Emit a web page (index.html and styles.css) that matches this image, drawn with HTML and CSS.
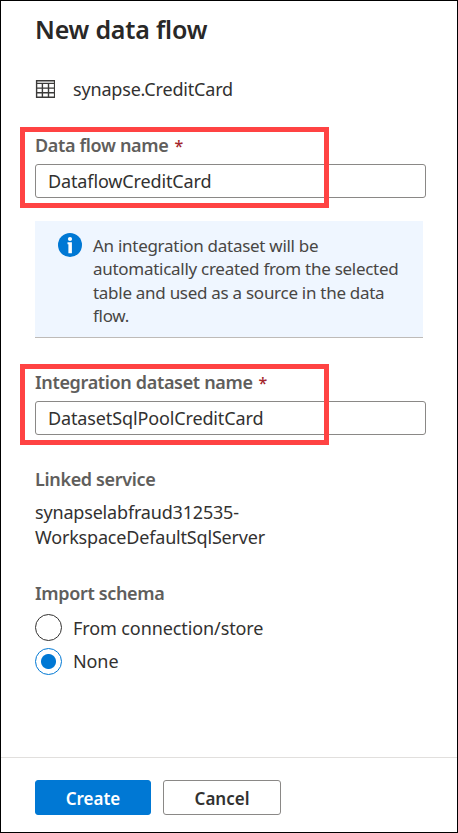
FILE: index.html
```html
<!DOCTYPE html>
<html lang="en">
<head>
<meta charset="utf-8">
<title>New data flow</title>
<link rel="stylesheet" href="styles.css">
</head>
<body>
<main class="panel">
  <h1 class="title">New data flow</h1>
  <div class="source">
    <svg class="table-icon" viewBox="0 0 20 18" width="20" height="18" fill="none" stroke="#3b3a39">
      <path d="M1.6.7h18v16.6h-18zM1.6 3.4h18M1.6 8.1h18M1.6 12.7h18M7.4 3.4v13.9M13.5 3.4v13.9" stroke-width="1.4"/>
    </svg>
    <span class="source-name">synapse.CreditCard</span>
  </div>
  <section class="field field-flow">
    <label class="label" for="flow">Data flow name<span class="req">*</span></label>
    <input class="input" id="flow" value="DataflowCreditCard">
    <div class="highlight"></div>
  </section>
  <aside class="info">
    <svg class="info-icon" viewBox="0 0 24 24" width="24" height="24">
      <circle cx="12" cy="12" r="12" fill="#0078d4"/>
      <circle cx="12" cy="6" r="2.1" fill="#fff"/>
      <path d="M9.5 9.3h4.4v11h-3.5v-9h-.9z" fill="#fff"/>
    </svg>
    <p class="info-text">An integration dataset will be<br>automatically created from the selected<br>table and used as a source in the data<br>flow.</p>
  </aside>
  <section class="field field-dataset">
    <label class="label" for="dataset">Integration dataset name<span class="req">*</span></label>
    <input class="input" id="dataset" value="DatasetSqlPoolCreditCard">
    <div class="highlight"></div>
  </section>
  <section class="linked">
    <h2 class="label">Linked service</h2>
    <p class="linked-value">synapselabfraud312535-<br>WorkspaceDefaultSqlServer</p>
  </section>
  <section class="schema">
    <h2 class="label">Import schema</h2>
    <div class="options">
      <div class="option"><span class="radio"></span><span>From connection/store</span></div>
      <div class="option"><span class="radio checked"></span><span>None</span></div>
    </div>
  </section>
  <footer class="footer">
    <button class="button primary">Create</button>
    <button class="button">Cancel</button>
  </footer>
</main>
</body>
</html>
```
FILE: styles.css
```css
* { box-sizing: border-box; margin: 0; }
body { background: #fff; }
.panel {
  width: 458px; height: 833px; border: 1px solid #000; padding: 0 31px 0 34px;
  display: flex; flex-direction: column;
  font: 18px/24px "Noto Sans", "Open Sans", sans-serif; letter-spacing: -.18px; color: #323130;
  white-space: nowrap; overflow: hidden;
}
.title { margin-top: 10px; font-size: 25px; line-height: 36px; font-weight: 600; letter-spacing: -.2px; color: #292827; }
.source { margin-top: 30px; display: flex; align-items: center; gap: 18px; height: 24px; }
.field { position: relative; height: 71px; }
.field-flow { margin-top: 33px; }
.label { display: block; font-size: 18px; line-height: 22px; padding-bottom: 2px; font-weight: 600; letter-spacing: -.34px; color: #605e5c; }
.req { color: #a4262c; margin-left: 6px; font-weight: 500; font-size: 16px; line-height: 1; }
.input {
  display: block; width: 391px; height: 34px; margin-top: 6px; padding: 0 0 0 12px;
  border: 1px solid #8a8886; border-radius: 3px; font: inherit; letter-spacing: -.13px; color: #323130; background: #fff;
}
.highlight { position: absolute; left: -15px; top: -7px; width: 309px; height: 81px; border: 5px solid #ff4343; }
.info {
  width: 388px; height: 117px; margin-top: 16px; padding: 12px 0 0 23px; display: flex; gap: 11px;
  background: #eff6ff; border-bottom: 1px solid #bebbb8;
}
.info-text { padding-top: 1px; font-size: 17px; line-height: 23.3px; letter-spacing: -.28px; color: #484644; }
.field-dataset { margin-top: 33px; }
.linked { margin-top: 26px; }
.linked-value { margin-top: 8px; line-height: 25px; }
.schema { margin-top: 32px; }
.options { margin-top: 5px; }
.option { display: flex; align-items: center; gap: 11px; height: 33.5px; letter-spacing: -.1px; }
.radio { width: 27px; height: 27px; border: 1.4px solid #323130; border-radius: 50%; }
.checked { border-color: #0078d4; background: radial-gradient(circle, #0078d4 7px, transparent 8px); }
.footer {
  display: flex; gap: 12px; height: 75px; margin: auto -31px 0 -34px; padding: 22px 0 0 34px;
  border-top: 1px solid #e1dfdd;
}
.button {
  width: 118px; height: 35px; padding: 2px 0 0; border: 1px solid #8a8886; border-radius: 3px;
  background: #fff; color: #323130; font: 600 17px/30px "Noto Sans", sans-serif; letter-spacing: 0;
}
.primary { width: 116px; background: #0078d4; border-color: #0078d4; color: #fff; }
```
